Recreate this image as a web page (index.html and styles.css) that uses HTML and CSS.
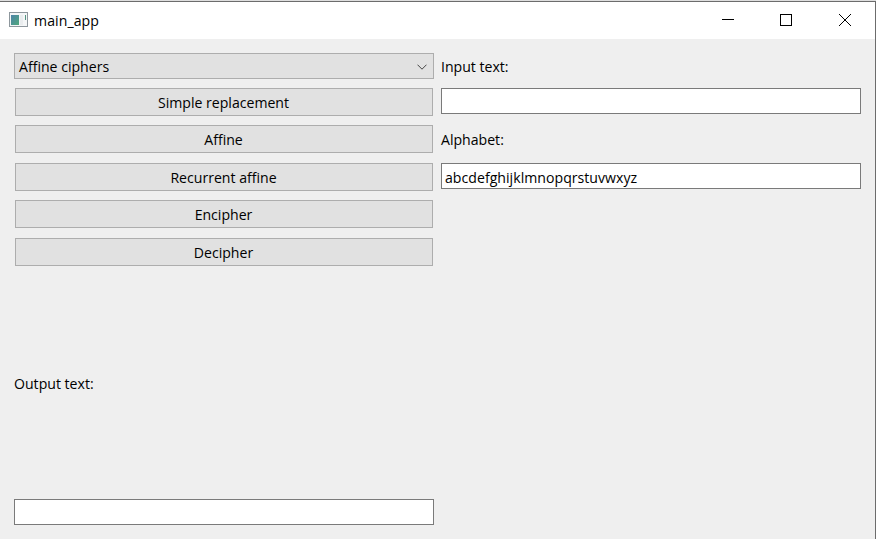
FILE: index.html
```html
<!DOCTYPE html>
<html lang="en">
<head>
<meta charset="utf-8">
<title>main_app</title>
<link rel="stylesheet" href="styles.css">
</head>
<body>
<div class="window">
  <header class="titlebar">
    <svg class="app-icon" width="19" height="16" viewBox="0 0 19 16">
      <defs>
        <linearGradient id="pane" x1="0" y1="0" x2="1" y2="1">
          <stop offset="0" stop-color="#4d83a8"/>
          <stop offset="1" stop-color="#4fa87c"/>
        </linearGradient>
      </defs>
      <rect x=".5" y=".5" width="18" height="14" fill="#f4f6f7" stroke="#8e979d"/>
      <rect x="2" y="3" width="8" height="10" fill="url(#pane)"/>
      <rect x="11" y="3" width="3" height="10" fill="#e9ecee"/>
      <rect x="16" y="3" width="1" height="5" fill="#559482"/>
    </svg>
    <span class="title">main_app</span>
    <div class="controls">
      <svg width="12" height="12" viewBox="0 0 12 12"><path d="M1 5.5h12"/></svg>
      <svg width="12" height="12" viewBox="0 0 12 12"><rect x=".5" y=".5" width="11" height="11"/></svg>
      <svg width="12" height="12" viewBox="0 0 12 12"><path d="M0 0l12 12M12 0L0 12"/></svg>
    </div>
  </header>
  <main class="content">
    <section class="column">
      <div class="combo">
        <span>Affine ciphers</span>
        <svg width="10" height="6" viewBox="0 0 10 6"><path d="M.5 .7L5 5.2 9.5 .7"/></svg>
      </div>
      <div class="buttons">
        <button>Simple replacement</button>
        <button>Affine</button>
        <button class="offset">Recurrent affine</button>
        <button>Encipher</button>
        <button class="offset">Decipher</button>
      </div>
      <div class="label output-label">Output text:</div>
      <div class="field"></div>
    </section>
    <section class="column">
      <div class="label input-label">Input text:</div>
      <div class="field"></div>
      <div class="label alphabet-label">Alphabet:</div>
      <div class="field alphabet">abcdefghijklmnopqrstuvwxyz</div>
    </section>
  </main>
</div>
</body>
</html>
```
FILE: styles.css
```css
* { box-sizing: border-box; }

body {
  margin: 0;
  height: 539px;
  overflow: hidden;
  padding-top: 1px;
  background: #dedede;
  color: #000;
  font: 14.1px/20px "Open Sans", "Noto Sans", sans-serif;
}

.window {
  height: 538px;
  border-top: 1px solid #6c6c6c;
  border-right: 1px solid #6c6c6c;
  background: #efefef;
}

.titlebar {
  display: flex;
  height: 37px;
  padding-left: 9px;
  background: #fff;
}

.app-icon { margin-top: 10px; }

.title {
  margin: 9px 0 0 6px;
  letter-spacing: .08px;
}

.controls {
  display: flex;
  gap: 47px;
  margin: 12px 24px 0 auto;
}

.controls svg {
  overflow: visible;
  fill: none;
  stroke: #000;
}

.content {
  display: flex;
  gap: 7px;
  padding: 14px 14px 0;
}

.column {
  display: flex;
  flex-direction: column;
  width: 420px;
}

.combo {
  display: flex;
  align-items: center;
  justify-content: space-between;
  height: 26px;
  padding: 2px 6px 0 4px;
  border: 1px solid #adadad;
  background: #e1e1e1;
}

.combo svg {
  fill: none;
  stroke: #444;
}

.buttons {
  display: flex;
  flex-direction: column;
  gap: 9px;
  padding: 9px 1px 0;
}

button {
  height: 28px;
  padding: 2px 1px 0 0;
  border: 1px solid #adadad;
  border-radius: 0;
  background: #e1e1e1;
  color: inherit;
  font: inherit;
}

button.offset { margin-top: 1px; }

.label { height: 20px; }

.output-label { margin: 108px 0 105px; }

.input-label { margin: 4px 0 11px; }

.alphabet-label { margin: 16px 0 13px; }

.field {
  height: 26px;
  padding: 4px 3px 0;
  border: 1px solid #7a7a7a;
  background: #fff;
}

.alphabet { letter-spacing: .03px; }
```
